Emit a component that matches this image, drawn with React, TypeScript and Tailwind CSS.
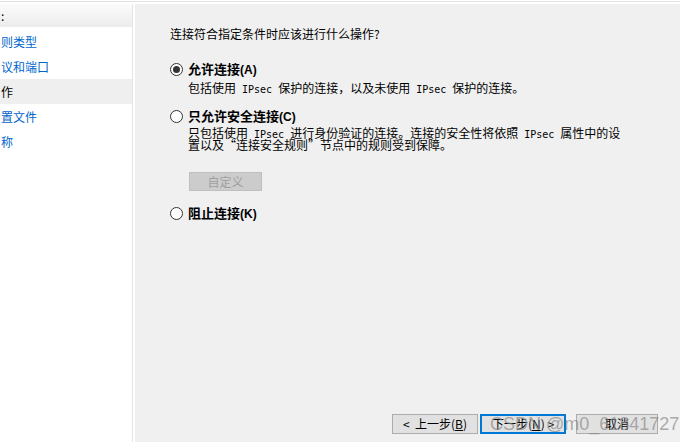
import React from "react";

const cjk = { fontFamily: '"Noto Sans CJK SC", "Noto Sans", sans-serif' };

function Mono({ children }: { children: React.ReactNode }) {
  return <span className="font-['DejaVu_Sans_Mono',monospace] text-[10px] leading-none">{children}</span>;
}

function Radio({ checked = false }: { checked?: boolean }) {
  return (
    <span className="flex h-[13px] w-[13px] shrink-0 items-center justify-center rounded-full border border-[#333333] bg-white">
      {checked && <span className="h-[7px] w-[7px] rounded-full bg-[#333333]" />}
    </span>
  );
}

function Option({ label, hot, checked }: { label: string; hot: string; checked?: boolean }) {
  return (
    <div className="flex h-4 items-center gap-[5px]">
      <Radio checked={checked} />
      <span className="text-[13px] font-bold leading-4 text-black">
        {label}
        <span className="font-['Liberation_Sans',sans-serif] text-[12px]">({hot})</span>
      </span>
    </div>
  );
}

const steps = [
  { text: "则类型", link: true },
  { text: "议和端口", link: true },
  { text: "作", link: false, active: true },
  { text: "置文件", link: true },
  { text: "称", link: true },
];

export default function App() {
  return (
    <div className="relative flex h-[442px] w-[680px] flex-col overflow-hidden bg-white" style={cjk}>
      <div className="mt-px h-px w-full bg-[#e3e3e3]" />
      <div className="mt-[2px] flex flex-1">
        {/* steps list */}
        <div className="flex w-[133px] flex-col border-r border-[#e6e6e6] bg-white">
          <div className="flex h-[23px] items-center bg-gradient-to-b from-[#fbfbfb] to-[#ececec] pl-[1px] text-[12px] text-black">
            :
          </div>
          <div className="mt-[2px] flex flex-col">
            {steps.map((s) => (
              <div
                key={s.text}
                className={`flex h-[25px] items-center pl-[1px] text-[12px] ${
                  s.active ? "bg-[#efefef] text-black" : "text-[#0066cc]"
                }`}
              >
                {s.text}
              </div>
            ))}
          </div>
        </div>
        <div className="w-[2px] bg-white" />
        {/* main */}
        <div className="flex flex-1 flex-col bg-[#f0f0f0] pl-[35px] pt-[22px]">
          <div className="text-[12px] leading-4 text-black">连接符合指定条件时应该进行什么操作?</div>

          <div className="mt-[19px]">
            <Option label="允许连接" hot="A" checked />
          </div>
          <div className="mt-[3px] whitespace-nowrap pl-[18px] text-[12px] leading-4 text-black">
            包括使用<Mono> IPsec </Mono>保护的连接，以及未使用<Mono> IPsec </Mono>保护的连接。
          </div>

          <div className="mt-3">
            <Option label="只允许安全连接" hot="C" />
          </div>
          <div className="mt-[3px] flex flex-col whitespace-nowrap pl-[18px] text-[12px] text-black">
            <div className="flex h-3 items-center">
              <span>
                只包括使用<Mono> IPsec </Mono>进行身份验证的连接。连接的安全性将依照<Mono> IPsec </Mono>属性中的设
              </span>
            </div>
            <div className="flex h-3 items-center">
              <span>置以及“连接安全规则”节点中的规则受到保障。</span>
            </div>
          </div>

          <div className="ml-[19px] mt-[21px] flex h-[19px] w-[73px] items-center justify-center border border-[#bfbfbf] bg-[#cccccc] text-[12px] text-[#a0a0a0]">
            自定义
          </div>

          <div className="mt-[14px]">
            <Option label="阻止连接" hot="K" />
          </div>

          <div className="mt-auto flex justify-end pb-2 pr-[22px]">
            <button className="flex h-5 w-[86px] items-center justify-center border border-[#adadad] bg-[#e1e1e1] text-[12px] text-black">
              &lt;&nbsp; 上一步(<span className="underline">B</span>)
            </button>
            <button className="ml-[2px] flex h-5 w-[86px] items-center justify-center border-2 border-[#0078d7] bg-[#e1e1e1] text-[12px] text-black">
              下一步(<span className="underline">N</span>) &gt;
            </button>
            <button className="ml-[10px] flex h-5 w-[82px] items-center justify-center border border-[#adadad] bg-[#e1e1e1] text-[12px] text-black">
              取消
            </button>
          </div>
        </div>
      </div>
      <div className="pointer-events-none absolute left-[490px] top-[413px] font-['Liberation_Sans',sans-serif] text-[18px] leading-[22px] text-[#8a8a8a]/70">
        CSDN @m0_61841727
      </div>
    </div>
  );
}
